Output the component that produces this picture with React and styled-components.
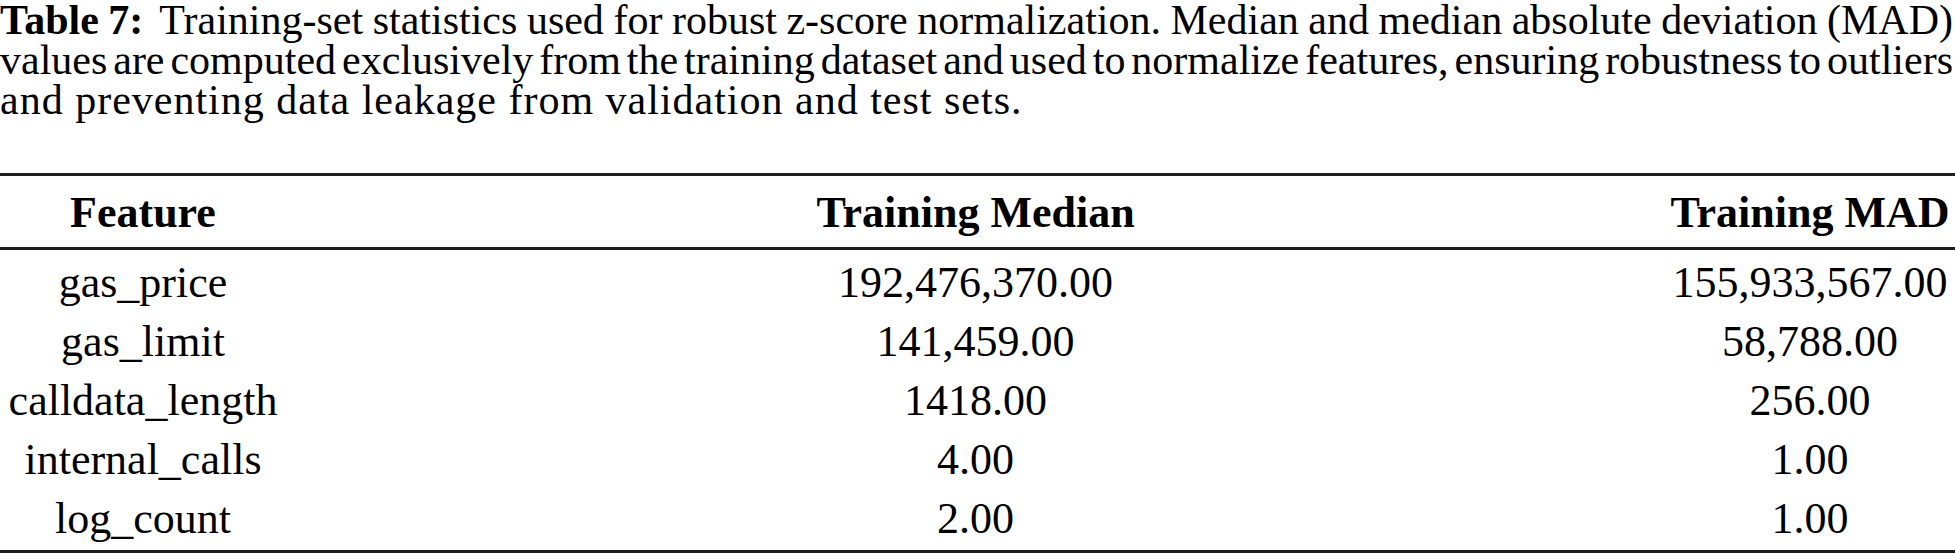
import React from 'react';
import styled, { createGlobalStyle } from 'styled-components';

const rows = [
  { feature: 'gas_price', median: '192,476,370.00', mad: '155,933,567.00' },
  { feature: 'gas_limit', median: '141,459.00', mad: '58,788.00' },
  { feature: 'calldata_length', median: '1418.00', mad: '256.00' },
  { feature: 'internal_calls', median: '4.00', mad: '1.00' },
  { feature: 'log_count', median: '2.00', mad: '1.00' },
];

function App() {
  return (
    <Page>
      <GlobalStyle />
      <Caption>
        <CaptionLine justify>
          <Label>Table 7:</Label>Training-set statistics used for robust z-score normalization. Median and median
          absolute deviation (MAD)
        </CaptionLine>
        <CaptionLine justify>
          values are computed exclusively from the training dataset and used to normalize features, ensuring
          robustness to outliers
        </CaptionLine>
        <CaptionLine>and preventing data leakage from validation and test sets.</CaptionLine>
      </Caption>

      <Table>
        <HeadRow>
          <Cell>Feature</Cell>
          <Cell>Training Median</Cell>
          <Cell>Training MAD</Cell>
        </HeadRow>
        <Body>
          {rows.map((r) => (
            <BodyRow key={r.feature}>
              <Cell>{r.feature}</Cell>
              <Cell>{r.median}</Cell>
              <Cell>{r.mad}</Cell>
            </BodyRow>
          ))}
        </Body>
      </Table>
    </Page>
  );
}
export default App;

const GlobalStyle = createGlobalStyle`
  html, body {
    margin: 0;
    padding: 0;
    background: #fff;
  }
  body {
    font-family: "Liberation Serif", "Times New Roman", serif;
    color: #000;
  }
`;

const Page = styled.div`
  width: 1955px;
  height: 557px;
  overflow: hidden;
`;

const Caption = styled.div`
  font-size: 42px;
  line-height: 40px;
  width: 1953px;
`;

// justified lines are set tight, the last line runs loose like the reference face
const CaptionLine = styled.div`
  white-space: nowrap;
  text-align: ${(p) => (p.justify ? 'justify' : 'left')};
  text-align-last: ${(p) => (p.justify ? 'justify' : 'left')};
  word-spacing: ${(p) => (p.justify ? '-6px' : '0')};
  letter-spacing: ${(p) => (p.justify ? '0' : '1px')};
`;

const Label = styled.span`
  font-weight: bold;
  margin-right: 16px;
`;

const Table = styled.div`
  margin-top: 53px;
  border-top: 3px solid #1e1e1e;
  border-bottom: 3px solid #1e1e1e;
  font-size: 44px;
`;

const Row = styled.div`
  display: grid;
  grid-template-columns: 286px 1379px 1fr;
  text-align: center;
`;

const HeadRow = styled(Row)`
  font-weight: bold;
  line-height: 69px;
  padding-top: 2px;
  border-bottom: 3px solid #1e1e1e;
`;

const Body = styled.div`
  padding: 3px 0 2px;
`;

const BodyRow = styled(Row)`
  line-height: 59px;
`;

const Cell = styled.div`
  white-space: nowrap;
`;
